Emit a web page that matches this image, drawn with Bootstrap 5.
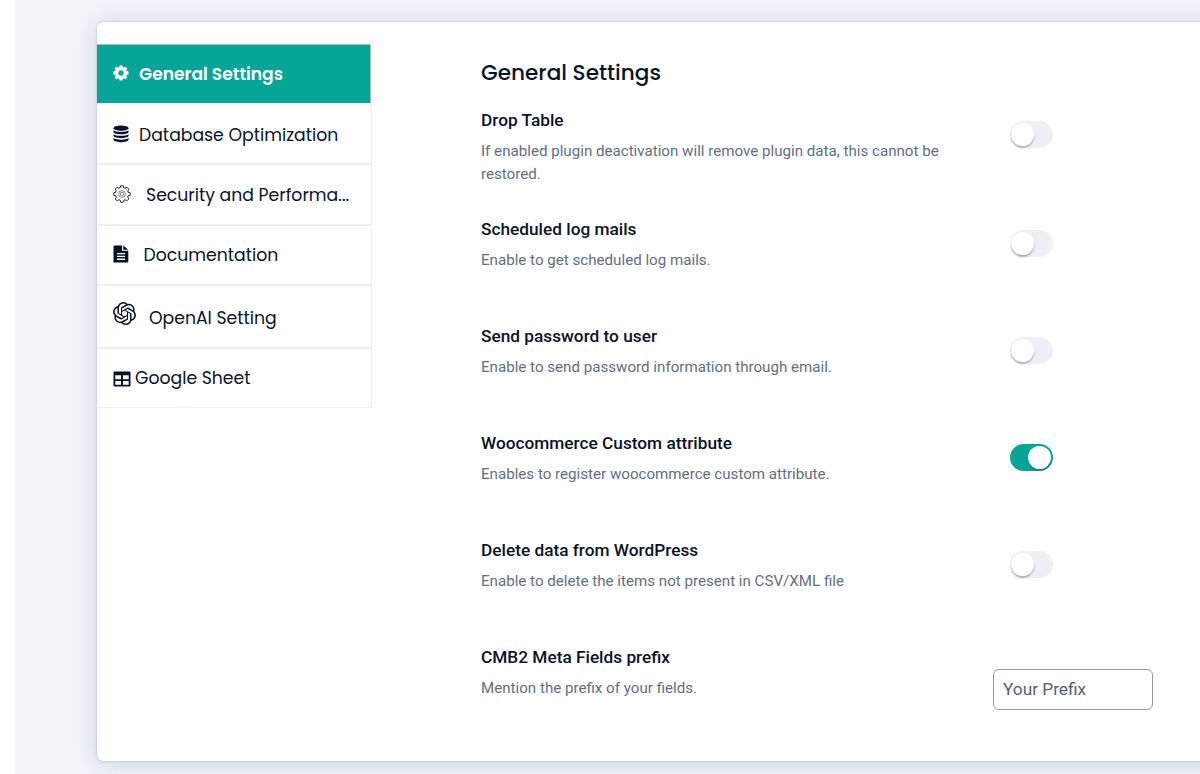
<!DOCTYPE html>
<html lang="en">
<head>
<meta charset="utf-8">
<meta name="viewport" content="width=device-width, initial-scale=1">
<title>General Settings</title>
<link href="https://cdn.jsdelivr.net/npm/bootstrap@5.3.0/dist/css/bootstrap.min.css" rel="stylesheet">
<style>
  body { background: #fff; font-family: Roboto, sans-serif; color: #07132b; height: 774px; overflow: hidden; }
  .page-bg { margin-left: 15px; height: 774px; background: #f2f4f9; padding: 22px 0 13px 82px; overflow: hidden; }
  .panel { width: 1240px; height: 738.5px; background: #fff; border-radius: 6px; box-shadow: 0 0 2px rgba(90,95,100,.4), 0 3px 22px rgba(110,140,175,.3); }
  .side { width: 275px; margin-top: 22px; font-family: Poppins, Inter, sans-serif; }
  .side .nav-link { height: 60.6px; padding: 1px 16px 0; color: #07132b; font-size: 17.25px; line-height: 26px; border: 1px solid #edf1f6; border-left: 0; border-radius: 0; white-space: nowrap; }
  .side .nav-link.active { height: 59px; width: 274px; padding-top: 0; background: #07a598; color: #fff; font-size: 17.1px; font-weight: 600; border: 1px solid #a9bdbc; border-bottom: 0; border-left: 0; }
  .side .active + .nav-link { height: 61px; padding-top: 2px; }
  .side .tall { height: 62.4px; padding-top: 3px; }
  .side .nav-link { gap: 10px; }
  .side .gap-gear { gap: 15px; }
  .side .gap-doc { gap: 14.5px; padding-top: 0; }
  .side .gap-ai { gap: 13px; }
  .side .gap-sheet { gap: 4px; padding-top: 0; }
  .side svg { flex: none; fill: currentColor; margin-top: -2px; }
  .side .gap-ai svg { margin-top: -8px; }
  .side .gap-sheet svg { margin-top: 2px; }
  .content { margin-left: 109px; width: 672px; padding-top: 37px; }
  .heading { font-family: Poppins, Inter, sans-serif; font-size: 21.6px; font-weight: 500; line-height: 28px; margin: 0; }
  .settings-list { padding-top: 21px; }
  .setting { height: 107px; }
  .setting:first-child { height: 109px; }
  .setting h2 { font-size: 17.25px; font-weight: 500; line-height: 24px; margin: 0 0 8px; position: relative; top: -.5px; }
  .setting p { font-size: 15.14px; line-height: 23px; color: #5f6f86; margin: 0; width: 470px; }
  .toggle { flex: none; width: 43px; height: 27px; margin: 12.5px 100.5px 0 0 !important; border: 0; border-radius: 14px !important; background-color: #edf1f7; background-image: none !important; appearance: none; display: flex; padding: 1px 1.5px; }
  .toggle::before { content: ""; width: 23px; height: 23px; margin-top: 1px; border-radius: 50%; background: #fff; box-shadow: 0 2px 2px rgba(50,60,80,.35); }
  .toggle:checked { background-color: #07a598; justify-content: flex-end; }
  .prefix { flex: none; width: 160px; height: 41px; margin: 23.5px 0 0; padding: 0 9px; border: 1px solid #8e99aa; border-radius: 6px; font-size: 17.25px; }
  .prefix::placeholder { color: #50627a; opacity: 1; }
</style>
</head>
<body>
<div class="page-bg">
  <div class="panel d-flex align-items-start">
    <nav class="nav flex-column flex-nowrap side">
      <a class="nav-link active d-flex align-items-center" href="#">
        <svg width="16" height="16" viewBox="0 0 16 16"><path fill-rule="evenodd" d="M6.500.5h3l.4 1.900.8.300L12.400 1.600l2 2-1.100 1.700.300.800 1.900.4v3l-1.900.4-.3.800 1.100 1.700-2 2-1.700-1.100-.8.300-.4 1.900h-3l-.4-1.900-.8-.3-1.700 1.100-2-2 1.100-1.700-.3-.8L.5 9.500v-3l1.900-.4.3-.8L1.600 3.600l2-2 1.700 1.100.8-.3zM8 5.300a2.700 2.700 0 1 0 0 5.400 2.700 2.700 0 0 0 0-5.400z"/></svg>
        <span>General Settings</span></a>
      <a class="nav-link d-flex align-items-center" href="#">
        <svg width="16" height="18" viewBox="0 0 16 18"><ellipse cx="8" cy="3.200" rx="7.500" ry="2.700"/><path d="M.5 5.300c2.500 2.100 12.500 2.100 15 0v1.900c-1.300 2.700-13.700 2.700-15 0zM.5 9.200c2.500 2.100 12.500 2.100 15 0v1.900c-1.300 2.700-13.700 2.700-15 0zM.5 13.100c2.500 2.100 12.500 2.100 15 0V15c-1.300 2.900-13.700 2.900-15 0z"/></svg>
        <span>Database Optimization</span></a>
      <a class="nav-link gap-gear d-flex align-items-center" href="#">
        <svg width="18" height="18" viewBox="0 0 18 18" style="fill:none" stroke="currentColor" stroke-width=".9" stroke-linejoin="round"><path d="M7.700.8h2.600l.5 2 1.300.5 1.800-1.100L15.800 4.100l-1.100 1.800.5 1.300 2 .5v2.600l-2 .5-.5 1.300 1.100 1.800-1.900 1.900-1.800-1.100-1.300.5-.5 2H7.700l-.5-2-1.300-.5-1.800 1.100-1.900-1.900 1.100-1.800-.5-1.300-2-.5V7.700l2-.5.5-1.300-1.100-1.800 1.900-1.900 1.800 1.100 1.300-.5z"/><circle cx="9" cy="9" r="3.400" stroke-width=".5"/><circle cx="9" cy="9" r="1.700" stroke-width=".5"/></svg>
        <span>Security and Performa...</span></a>
      <a class="nav-link gap-doc d-flex align-items-center" href="#">
        <svg width="16" height="18" viewBox="0 0 16 18"><path fill-rule="evenodd" d="M1.500.5H9v5.300h6.300v11.700H.5v-16a1 1 0 0 1 1-1zM4 8v1.300h8V8zm0 2.800v1.300h8v-1.300zm0 2.800v1.300h8v-1.300zM10.200.5l5.100 4.300h-5.100z"/></svg>
        <span>Documentation</span></a>
      <a class="nav-link tall gap-ai d-flex align-items-center" href="#">
        <svg width="23" height="23" viewBox="0 0 24 24"><path d="M22.2819 9.8211a5.9847 5.9847 0 0 0-.5157-4.9108 6.0462 6.0462 0 0 0-6.5098-2.9A6.0651 6.0651 0 0 0 4.9807 4.1818a5.9847 5.9847 0 0 0-3.9977 2.9 6.0462 6.0462 0 0 0 .7427 7.0966 5.98 5.98 0 0 0 .511 4.9107 6.051 6.051 0 0 0 6.5146 2.9001A5.9847 5.9847 0 0 0 13.2599 24a6.0557 6.0557 0 0 0 5.7718-4.2058 5.9894 5.9894 0 0 0 3.9977-2.9001 6.0557 6.0557 0 0 0-.7475-7.0729zm-9.022 12.6081a4.4755 4.4755 0 0 1-2.8764-1.0408l.1419-.0804 4.7783-2.7582a.7948.7948 0 0 0 .3927-.6813v-6.7369l2.02 1.1686a.071.071 0 0 1 .038.052v5.5826a4.504 4.504 0 0 1-4.4945 4.4944zm-9.6607-4.1254a4.4708 4.4708 0 0 1-.5346-3.0137l.142.0852 4.783 2.7582a.7712.7712 0 0 0 .7806 0l5.8428-3.3685v2.3324a.0804.0804 0 0 1-.0332.0615L9.74 19.9502a4.4992 4.4992 0 0 1-6.1408-1.6464zM2.3408 7.8956a4.485 4.485 0 0 1 2.3655-1.9728V11.6a.7664.7664 0 0 0 .3879.6765l5.8144 3.3543-2.0201 1.1685a.0757.0757 0 0 1-.071 0l-4.8303-2.7865A4.504 4.504 0 0 1 2.3408 7.872zm16.5963 3.8558L13.1038 8.364 15.1192 7.2a.0757.0757 0 0 1 .071 0l4.8303 2.7913a4.4944 4.4944 0 0 1-.6765 8.1042v-5.6772a.79.79 0 0 0-.407-.667zm2.0107-3.0231l-.142-.0852-4.7735-2.7818a.7759.7759 0 0 0-.7854 0L9.409 9.2297V6.8974a.0662.0662 0 0 1 .0284-.0615l4.8303-2.7866a4.4992 4.4992 0 0 1 6.6802 4.66zM8.3065 12.863l-2.02-1.1638a.0804.0804 0 0 1-.038-.0567V6.0742a4.4992 4.4992 0 0 1 7.3757-3.4537l-.142.0805L8.704 5.459a.7948.7948 0 0 0-.3927.6813zm1.0976-2.3654l2.602-1.4998 2.6069 1.4998v2.9994l-2.5974 1.4997-2.6067-1.4997Z"/></svg>
        <span>OpenAI Setting</span></a>
      <a class="nav-link gap-sheet d-flex align-items-center" href="#">
        <svg width="18" height="16" viewBox="0 0 18 16"><path fill-rule="evenodd" d="M1.500.5h15a1 1 0 0 1 1 1v13a1 1 0 0 1-1 1h-15a1 1 0 0 1-1-1v-13a1 1 0 0 1 1-1zM2.300 4.300v3.900H8V4.300zm7.700 0v3.900h5.700V4.300zm-7.700 5.700v3.800H8V10zm7.700 0v3.800h5.700V10z"/></svg>
        <span>Google Sheet</span></a>
    </nav>
    <main class="content">
      <h1 class="heading">General Settings</h1>
      <div class="settings-list">
        <div class="setting d-flex justify-content-between"><div><h2>Drop Table</h2><p>If enabled plugin deactivation will remove plugin data, this cannot be restored.</p></div><input type="checkbox" class="form-check-input toggle" aria-label="Drop Table"></div>
        <div class="setting d-flex justify-content-between"><div><h2>Scheduled log mails</h2><p>Enable to get scheduled log mails.</p></div><input type="checkbox" class="form-check-input toggle" aria-label="Scheduled log mails"></div>
        <div class="setting d-flex justify-content-between"><div><h2>Send password to user</h2><p>Enable to send password information through email.</p></div><input type="checkbox" class="form-check-input toggle" aria-label="Send password"></div>
        <div class="setting d-flex justify-content-between"><div><h2>Woocommerce Custom attribute</h2><p>Enables to register woocommerce custom attribute.</p></div><input type="checkbox" class="form-check-input toggle" checked aria-label="Custom attribute"></div>
        <div class="setting d-flex justify-content-between"><div><h2>Delete data from WordPress</h2><p>Enable to delete the items not present in CSV/XML file</p></div><input type="checkbox" class="form-check-input toggle" aria-label="Delete data"></div>
        <div class="setting d-flex justify-content-between"><div><h2>CMB2 Meta Fields prefix</h2><p>Mention the prefix of your fields.</p></div><input type="text" class="form-control prefix" placeholder="Your Prefix" aria-label="Prefix"></div>
      </div>
    </main>
  </div>
</div>
<script src="https://cdn.jsdelivr.net/npm/bootstrap@5.3.0/dist/js/bootstrap.bundle.min.js"></script>
</body>
</html>
